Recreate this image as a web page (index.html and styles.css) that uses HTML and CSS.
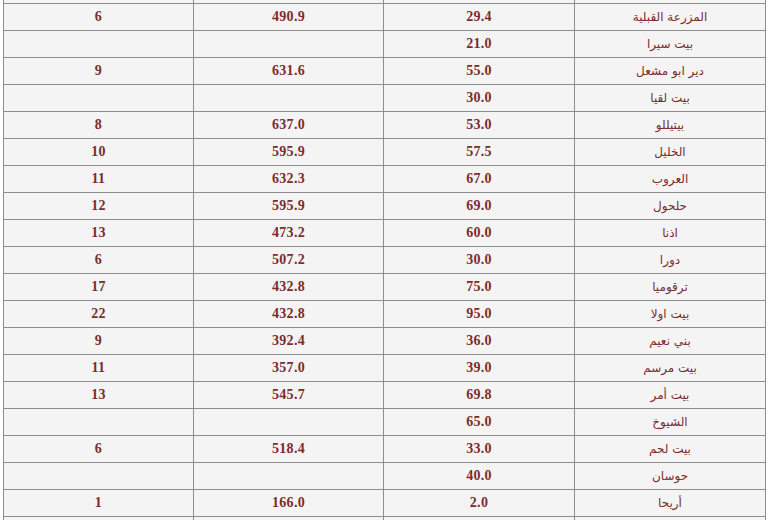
FILE: index.html
```html
<!DOCTYPE html>
<html lang="ar">
<head>
<meta charset="utf-8">
<link rel="stylesheet" href="styles.css">
</head>
<body>
<div class="page">
<table class="data" dir="rtl">
<colgroup>
<col class="c-name"><col class="c-v1"><col class="c-v2"><col class="c-n">
</colgroup>
<tbody>
<tr class="stub"><td class="name"></td><td class="num"></td><td class="num"></td><td class="num"></td></tr>
<tr><td class="name">المزرعة القبلية</td><td class="num">29.4</td><td class="num">490.9</td><td class="num">6</td></tr>
<tr><td class="name">بيت سيرا</td><td class="num">21.0</td><td class="num"></td><td class="num"></td></tr>
<tr><td class="name">دير ابو مشعل</td><td class="num">55.0</td><td class="num">631.6</td><td class="num">9</td></tr>
<tr><td class="name">بيت لقيا</td><td class="num">30.0</td><td class="num"></td><td class="num"></td></tr>
<tr><td class="name">بيتيللو</td><td class="num">53.0</td><td class="num">637.0</td><td class="num">8</td></tr>
<tr><td class="name">الخليل</td><td class="num">57.5</td><td class="num">595.9</td><td class="num">10</td></tr>
<tr><td class="name">العروب</td><td class="num">67.0</td><td class="num">632.3</td><td class="num">11</td></tr>
<tr><td class="name">حلحول</td><td class="num">69.0</td><td class="num">595.9</td><td class="num">12</td></tr>
<tr><td class="name">اذنا</td><td class="num">60.0</td><td class="num">473.2</td><td class="num">13</td></tr>
<tr><td class="name">دورا</td><td class="num">30.0</td><td class="num">507.2</td><td class="num">6</td></tr>
<tr><td class="name">ترقوميا</td><td class="num">75.0</td><td class="num">432.8</td><td class="num">17</td></tr>
<tr><td class="name">بيت اولا</td><td class="num">95.0</td><td class="num">432.8</td><td class="num">22</td></tr>
<tr><td class="name">بني نعيم</td><td class="num">36.0</td><td class="num">392.4</td><td class="num">9</td></tr>
<tr><td class="name">بيت مرسم</td><td class="num">39.0</td><td class="num">357.0</td><td class="num">11</td></tr>
<tr><td class="name">بيت أمر</td><td class="num">69.8</td><td class="num">545.7</td><td class="num">13</td></tr>
<tr><td class="name">الشيوخ</td><td class="num">65.0</td><td class="num"></td><td class="num"></td></tr>
<tr><td class="name">بيت لحم</td><td class="num">33.0</td><td class="num">518.4</td><td class="num">6</td></tr>
<tr><td class="name">حوسان</td><td class="num">40.0</td><td class="num"></td><td class="num"></td></tr>
<tr><td class="name">أريحا</td><td class="num">2.0</td><td class="num">166.0</td><td class="num">1</td></tr>
<tr class="stub"><td class="name"></td><td class="num"></td><td class="num"></td><td class="num"></td></tr>
</tbody>
</table>
</div>
</body>
</html>
```
FILE: styles.css
```css
html, body {
  margin: 0;
  padding: 0;
  background: #ffffff;
  overflow: hidden;
}
.page {
  padding-left: 3px;
  height: 520px;
  overflow: hidden;
}
.data {
  margin-top: -24px;
  border-collapse: collapse;
  table-layout: fixed;
  width: 763px;
  background: #f5f4f4;
}
.c-name { width: 191px; }
.c-v1 { width: 191px; }
.c-v2 { width: 190px; }
.c-n { width: 190px; }
.data td {
  border: 1px solid #8e8e8e;
  height: 26px;
  padding: 0;
  text-align: center;
  vertical-align: middle;
  color: #7a2c2c;
}
.num {
  font-family: "Liberation Serif", serif;
  font-weight: bold;
  font-size: 14px;
  letter-spacing: 0.3px;
  padding-top: 2px;
}
.name {
  font-family: "DejaVu Sans", sans-serif;
  font-size: 12px;
  padding-top: 1px;
}
```
